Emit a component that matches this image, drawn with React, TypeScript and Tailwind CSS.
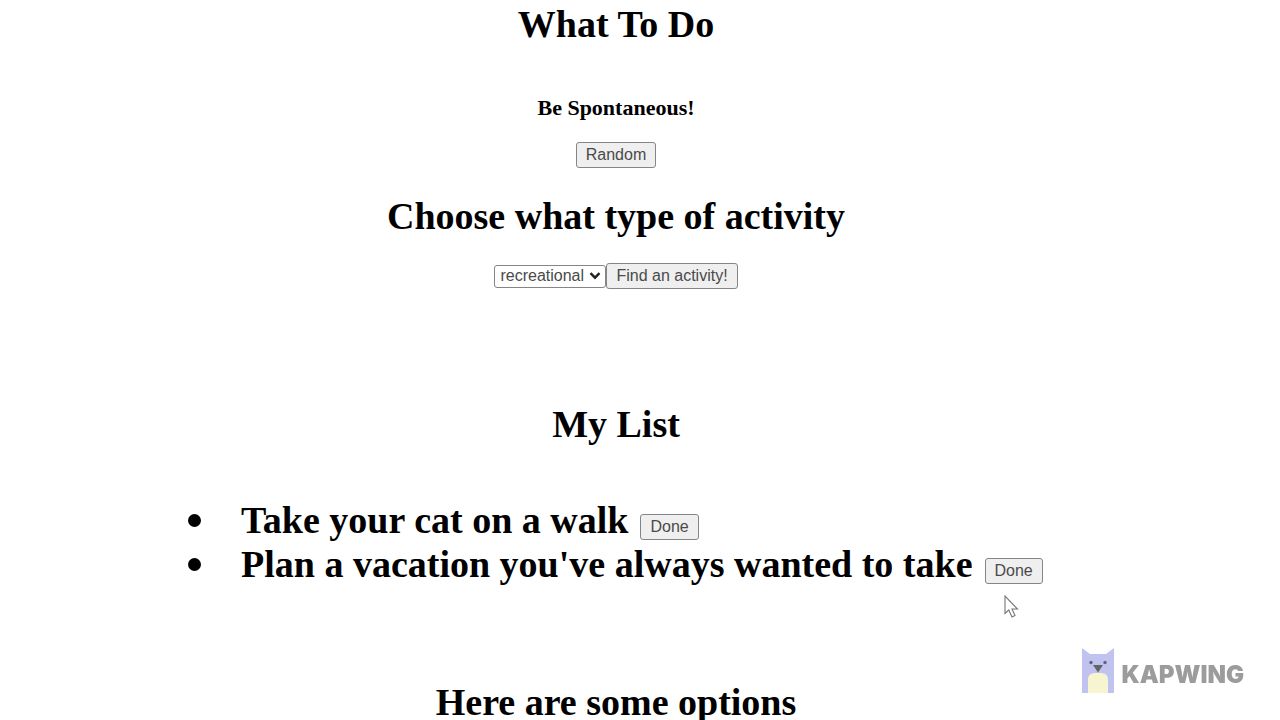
import { useState } from "react";
import type { ReactNode } from "react";

const types = ["recreational", "education", "social", "diy", "charity", "cooking", "relaxation", "music", "busywork"];

function Button({ children, onClick }: { children: ReactNode; onClick?: () => void }) {
  return (
    <button
      type="button"
      onClick={onClick}
      className="h-[26px] rounded-[3px] border border-[#858585] bg-[#efefef] px-[9px] font-['Liberation_Sans',sans-serif] text-base leading-6 font-normal text-[#4a4a4a]"
    >
      {children}
    </button>
  );
}

function Heading({ children }: { children: ReactNode }) {
  return <h2 className="text-[38px] leading-[44px] font-bold">{children}</h2>;
}

function Watermark() {
  return (
    <div className="fixed right-9 bottom-6 flex items-center gap-[6px]">
      <svg width="34" height="48" viewBox="0 0 34 48" aria-hidden="true">
        <path d="M1 0 9 6H25L33 0V45H1Z" fill="#c0c3f0" />
        <path d="M7 45V32Q7 25 14 25H20Q27 25 27 32V45Z" fill="#f6f5d0" />
        <circle cx="10" cy="14.5" r="1.7" fill="#626475" />
        <circle cx="24" cy="14.5" r="1.7" fill="#626475" />
        <path d="M12 17H22L17 24.5Z" fill="#646465" />
      </svg>
      <span className="pt-[6px] font-['Inter',sans-serif] text-[24px] leading-8 font-black text-[#9c9c9c]">KAPWING</span>
    </div>
  );
}

export default function App() {
  const [type, setType] = useState("recreational");
  const [items, setItems] = useState(["Take your cat on a walk", "Plan a vacation you've always wanted to take"]);

  return (
    <div className="h-screen overflow-hidden bg-white pr-12 font-['Liberation_Serif',serif] text-black">
      <main className="flex flex-col items-center pt-[2px]">
        <h1 className="text-[38px] leading-[44px] font-bold">What To Do</h1>
        <h4 className="mt-[49px] mb-[21px] text-[22px] leading-[26px] font-bold">Be Spontaneous!</h4>
        <Button>Random</Button>
        <div className="mt-[26px] mb-[25px]">
          <Heading>Choose what type of activity</Heading>
        </div>
        <form className="flex items-center">
          <div className="relative flex">
            <select
              aria-label="Activity type"
              value={type}
              onChange={(e) => setType(e.target.value)}
              className="h-[23px] w-28 appearance-none rounded-[3px] border border-[#858585] bg-white pl-[5px] font-['Liberation_Sans',sans-serif] text-base leading-5 text-[#4a4a4a]"
            >
              {types.map((t) => (
                <option key={t}>{t}</option>
              ))}
            </select>
            <svg className="pointer-events-none absolute top-[7px] right-[5px]" width="12" height="8" viewBox="0 0 12 8" fill="none" aria-hidden="true">
              <path d="M1.5 1.2 6 5.7 10.5 1.2" stroke="#222" strokeWidth="2.4" />
            </svg>
          </div>
          <Button>Find an activity!</Button>
        </form>
        <div className="mt-[113px] mb-[52px]">
          <Heading>My List</Heading>
        </div>
        <ul className="w-full pl-[188px]">
          {items.map((item) => (
            <li key={item} className="flex h-11 items-center text-[38px] leading-[44px] font-bold">
              <span className="mr-10 size-[13px] shrink-0 rounded-full bg-black" />
              <span className="mr-3 whitespace-nowrap">{item}</span>
              <span className="flex pt-[14px]">
                <Button onClick={() => setItems(items.filter((i) => i !== item))}>Done</Button>
              </span>
            </li>
          ))}
        </ul>
        <div className="mt-[94px]">
          <Heading>Here are some options</Heading>
        </div>
      </main>
      <svg className="pointer-events-none absolute top-[595px] left-[1004px]" width="15" height="24" viewBox="0 0 15 24" aria-hidden="true">
        <path d="M1 1V18.5L4.8 15 8 22 11 20.5 8 14H13.5Z" fill="#fff" stroke="#777" strokeWidth="1.1" />
      </svg>
      <Watermark />
    </div>
  );
}
